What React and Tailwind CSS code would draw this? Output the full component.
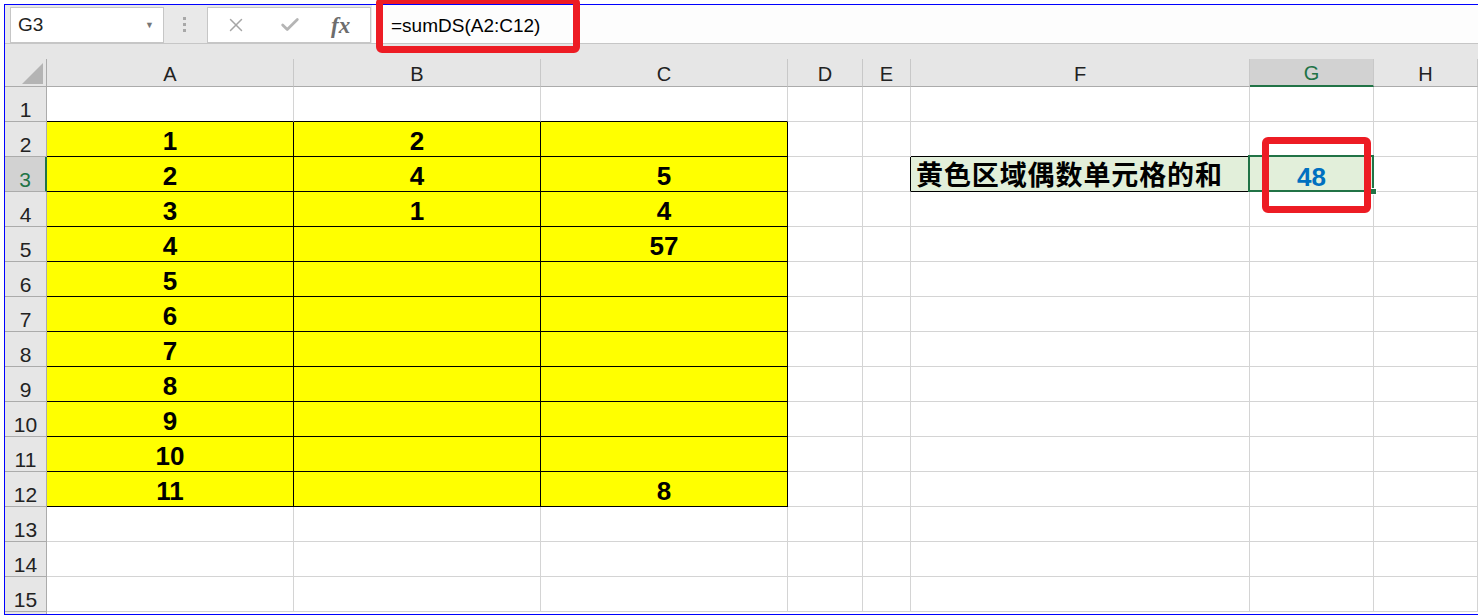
import React from "react";
import { X, Check } from "lucide-react";

const ui = { fontFamily: '"Liberation Sans", Arial, sans-serif' };
const cjk = { fontFamily: '"Liberation Sans", "Noto Sans CJK SC", sans-serif' };

const COLS = [
  { key: "A", w: "w-[247px]" },
  { key: "B", w: "w-[247px]" },
  { key: "C", w: "w-[247px]" },
  { key: "D", w: "w-[75px]" },
  { key: "E", w: "w-[48px]" },
  { key: "F", w: "w-[339px]" },
  { key: "G", w: "w-[124px]" },
  { key: "H", w: "w-[104px]" },
];

const DATA = {
  2: ["1", "2", ""],
  3: ["2", "4", "5"],
  4: ["3", "1", "4"],
  5: ["4", "", "57"],
  6: ["5", "", ""],
  7: ["6", "", ""],
  8: ["7", "", ""],
  9: ["8", "", ""],
  10: ["9", "", ""],
  11: ["10", "", ""],
  12: ["11", "", "8"],
};

const ROWS = Array.from({ length: 15 }, (_, i) => i + 1);

function Cell({ row, colIdx, w }) {
  const yellow = row >= 2 && row <= 12 && colIdx <= 2;
  // borders: right + bottom for each cell
  let right = "border-r-[#d4d4d4]";
  let bottom = "border-b-[#d4d4d4]";
  let bg = "bg-white";
  let value = "";

  if (yellow) {
    bg = "bg-[#ffff00]";
    right = "border-r-black";
    bottom = "border-b-black";
    value = DATA[row][colIdx];
  }
  if (row === 1 && colIdx <= 2) bottom = "border-b-black";
  // F3 label cell
  if (row === 2 && colIdx === 5) bottom = "border-b-black";
  if (row === 3 && colIdx === 4) right = "border-r-black";
  if (row === 3 && colIdx === 5) {
    return (
      <div
        className={`${w} h-full shrink-0 border-r border-b border-r-[#d4d4d4] border-b-black bg-[#e2efda] flex items-end pl-[5px]`}
      >
        <span className="text-[27px] leading-none font-bold text-black tracking-[0.9px] pb-[1px]" style={cjk}>
          黄色区域偶数单元格的和
        </span>
      </div>
    );
  }
  if (row === 3 && colIdx === 6) {
    return (
      <div className={`${w} h-full shrink-0 relative border-r border-b border-r-[#d4d4d4] border-b-[#d4d4d4] bg-[#e2efda] flex items-end justify-center`}>
        <span className="text-[26px] leading-none font-bold text-[#0070c0] pb-[1px]" style={ui}>
          48
        </span>
        <div className="absolute -left-[2px] -top-[2px] -right-[1px] -bottom-[1px] border-2 border-[#217346]" />
        <div className="absolute -right-[4px] -bottom-[4px] w-[7px] h-[7px] bg-[#217346] border border-white" />
      </div>
    );
  }

  return (
    <div className={`${w} h-full shrink-0 border-r border-b ${right} ${bottom} ${bg} flex items-end justify-center`}>
      {value && (
        <span className="text-[26px] leading-none font-bold text-black pb-[2px]" style={ui}>
          {value}
        </span>
      )}
    </div>
  );
}

function FormulaBar() {
  return (
    <div className="h-[39px] bg-[#e9e9e9] border-b border-[#c6c6c6] flex items-start" style={ui}>
      <div className="ml-[5px] mt-[2px] w-[154px] h-[36px] bg-white border border-[#c6c6c6] flex items-center justify-between pl-[7px] pr-[9px] pt-[1px]">
        <span className="text-[19px] text-[#222]">G3</span>
        <span className="text-[9px] text-[#777]">▼</span>
      </div>
      <div className="ml-[19px] mt-[12px] flex flex-col gap-[3px]">
        <div className="w-[3px] h-[3px] bg-[#a8a8a8]" />
        <div className="w-[3px] h-[3px] bg-[#a8a8a8]" />
        <div className="w-[3px] h-[3px] bg-[#a8a8a8]" />
      </div>
      <div className="ml-[21px] mt-[2px] w-[164px] h-[36px] bg-white border border-[#c6c6c6] flex items-center">
        <X className="ml-[17px] w-[22px] h-[22px] text-[#a6a6a6]" strokeWidth={1.6} />
        <Check className="ml-[32px] w-[22px] h-[22px] text-[#b5b5b5]" strokeWidth={3} />
        <span
          className="ml-[30px] text-[23px] italic font-bold text-[#6d6d6d] leading-none"
          style={{ fontFamily: '"Liberation Serif", "Times New Roman", serif' }}
        >
          fx
        </span>
      </div>
      <div className="ml-[1px] flex-1 h-[38px] bg-[#fdfdfd] flex items-center pl-[19px] pt-[4px]">
        <span className="text-[19px] text-black">=sumDS(A2:C12)</span>
      </div>
    </div>
  );
}

function HeaderRow() {
  return (
    <div className="h-[43px] bg-[#e6e6e6] flex items-end" style={ui}>
      <div className="w-[42px] h-[28px] shrink-0 border-r border-b border-[#ababab] relative">
        <svg className="absolute left-[17px] top-[4px]" width="21" height="21" viewBox="0 0 21 21">
          <polygon points="21,0 21,21 0,21" fill="#b4b4b4" />
        </svg>
      </div>
      {COLS.map((c) => {
        const sel = c.key === "G";
        return (
          <div
            key={c.key}
            className={`${c.w} h-[28px] shrink-0 border-r border-[#c8c8c8] flex items-center justify-center text-[20px] pt-[2px] ${
              sel
                ? "bg-[#d2d2d2] text-[#217346] border-b-2 border-b-[#217346]"
                : "text-[#222] border-b border-b-[#ababab]"
            }`}
          >
            {c.key}
          </div>
        );
      })}
    </div>
  );
}

export default function App() {
  return (
    <div className="w-[1478px] h-[616px] overflow-hidden bg-white pt-[4px] pl-[4px] relative">
      <div className="h-[611px] border-l border-t border-b border-[#0000ff] overflow-hidden">
        <FormulaBar />
        <HeaderRow />
        {ROWS.map((r) => {
          const sel = r === 3;
          return (
            <div key={r} className="h-[35px] flex">
              <div
                className={`w-[42px] h-full shrink-0 border-b border-[#ababab] flex items-end justify-center text-[21px] leading-none pb-[1px] ${
                  sel
                    ? "bg-[#d2d2d2] text-[#217346] border-r-2 border-r-[#217346]"
                    : "bg-[#e6e6e6] text-[#222] border-r"
                }`}
                style={ui}
              >
                {r}
              </div>
              {COLS.map((c, i) => (
                <Cell key={c.key} row={r} colIdx={i} w={c.w} />
              ))}
            </div>
          );
        })}
        <div className="h-[2px] flex">
          <div className="w-[42px] h-full shrink-0 bg-[#e6e6e6] border-r border-[#ababab]" />
          <div className="flex-1" />
        </div>
      </div>

      {/* red highlight boxes drawn over the sheet */}
      <div className="absolute left-[376px] top-[-3px] w-[204px] h-[56px] border-[7px] border-[#ed1c24] rounded-[6px]" />
      <div className="absolute left-[1262px] top-[137px] w-[109px] h-[76px] border-[7px] border-[#ed1c24] rounded-[6px]" />
    </div>
  );
}
